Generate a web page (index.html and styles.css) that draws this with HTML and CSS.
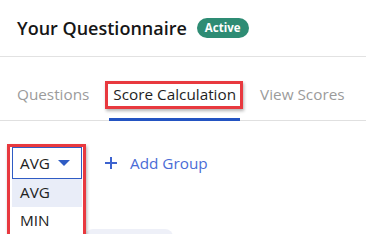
FILE: index.html
```html
<!DOCTYPE html>
<html>
<head>
<meta charset="utf-8">
<link rel="stylesheet" href="styles.css">
</head>
<body>
<div class="page">
  <header class="header">
    <h1 class="title">Your Questionnaire</h1>
    <span class="badge">Active</span>
  </header>
  <nav class="tabs">
    <div class="tab">Questions</div>
    <div class="tab tab-active">Score Calculation<span class="mark mark-tab"></span></div>
    <div class="tab">View Scores</div>
  </nav>
  <section class="content">
    <div class="toolbar">
      <div class="dropdown">
        <div class="select">
          <span class="select-value">AVG</span>
          <svg class="caret" width="12" height="6" viewBox="0 0 12 6"><path d="M0 0H12L6 6Z" fill="#2f5cc4"/></svg>
        </div>
        <ul class="options">
          <li class="option option-hover">AVG</li>
          <li class="option">MIN</li>
        </ul>
        <span class="mark mark-dropdown"></span>
      </div>
      <button class="add-group">
        <svg class="plus" width="12" height="12" viewBox="0 0 12 12"><path d="M6 0V12M0 6H12" stroke="#3d63cf" stroke-width="2"/></svg>
        <span>Add Group</span>
      </button>
    </div>
    <div class="group-pill"></div>
  </section>
</div>
</body>
</html>
```

FILE: styles.css
```css
* { box-sizing: border-box; }
html, body { margin: 0; padding: 0; background: #fff; }
body {
  font-family: "Open Sans", Lato, sans-serif;
  color: #1c1c1c;
  width: 366px;
  height: 234px;
  overflow: hidden;
}
.header {
  display: flex;
  align-items: center;
  gap: 10px;
  height: 57px;
  padding: 0 0 1px 17px;
  border-bottom: 1px solid #e2e2e2;
}
.title {
  margin: 0;
  font-size: 18px;
  font-weight: 600;
  color: #161616;
}
.badge {
  display: inline-flex;
  align-items: center;
  height: 20px;
  padding: 0 8px;
  border-radius: 10px;
  background: #2e8c74;
  color: #fff;
  font-size: 11.5px;
  font-weight: 700;
}
.tabs {
  display: flex;
  align-items: flex-end;
  gap: 16px;
  height: 64px;
  padding-left: 13px;
  border-bottom: 1px solid #e0e0e0;
}
.tab {
  position: relative;
  padding: 0 4px 15px;
  margin-bottom: -1px;
  font-size: 15.3px;
  line-height: 18px;
  color: #9b9b9b;
  border-bottom: 3px solid transparent;
}
.tab-active {
  color: #1e1e1e;
  border-bottom-color: #2353c2;
}
.mark {
  position: absolute;
  border: 3px solid #e8393f;
  box-shadow: 1px 2px 3px rgba(0,0,0,0.3);
  pointer-events: none;
}
.mark-tab {
  left: -4px;
  right: -3px;
  top: -4px;
  height: 28px;
}
.content {
  padding: 26px 0 0 12px;
}
.toolbar {
  display: flex;
  align-items: center;
}
.dropdown {
  position: relative;
  width: 70px;
}
.select {
  display: flex;
  align-items: center;
  gap: 8px;
  height: 32px;
  padding-left: 7px;
  border: 1px solid #2f5cc4;
  font-size: 15.3px;
  color: #222;
}
.options {
  position: absolute;
  left: 0;
  right: 0;
  top: 32px;
  margin: 0;
  padding: 0;
  list-style: none;
  background: #fff;
}
.option {
  height: 28px;
  line-height: 27px;
  padding-left: 8px;
  font-size: 15.3px;
  color: #222;
}
.option-hover { background: #e9edf8; }
.mark-dropdown {
  left: -5px;
  right: -4px;
  top: -3px;
  height: 100px;
}
.add-group {
  display: flex;
  align-items: center;
  gap: 13px;
  margin-left: 23px;
  padding: 0;
  border: 0;
  background: none;
  font-family: inherit;
  font-size: 15.3px;
  color: #4a6cd6;
}
.group-pill {
  width: 88px;
  height: 20px;
  margin: 50px 0 0 73px;
  border-radius: 8px;
  background: #eef0f8;
}
```
